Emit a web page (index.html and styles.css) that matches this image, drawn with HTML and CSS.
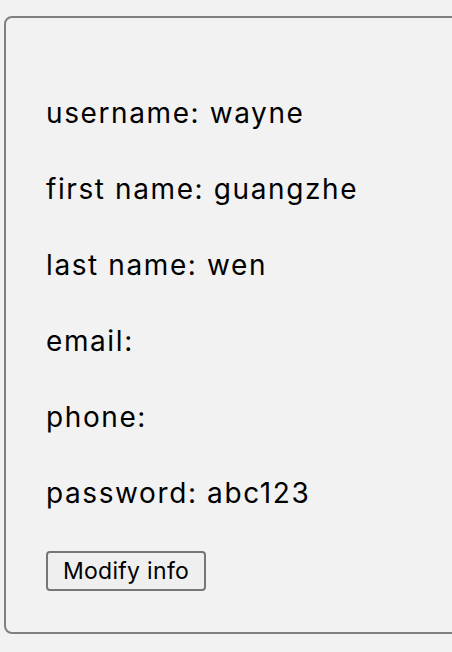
FILE: index.html
```html
<!DOCTYPE html>
<html>
<head>
<meta charset="utf-8">
<link rel="stylesheet" href="styles.css">
</head>
<body>
<div class="card">
  <div class="rows">
    <div class="row">username: wayne</div>
    <div class="row">first name: guangzhe</div>
    <div class="row">last name: wen</div>
    <div class="row">email:</div>
    <div class="row">phone:</div>
    <div class="row">password: abc123</div>
  </div>
  <button class="btn">Modify info</button>
</div>
</body>
</html>
```
FILE: styles.css
```css
html, body {
  margin: 0;
  background: #f2f2f2;
}
body {
  padding: 16px 0 0 4px;
  overflow: hidden;
  height: 652px;
  box-sizing: border-box;
}
.card {
  width: 500px;
  height: 618px;
  box-sizing: border-box;
  border: 2px solid #808080;
  border-radius: 8px;
  padding: 80px 0 0 40px;
  display: flex;
  flex-direction: column;
  align-items: flex-start;
  font-family: Inter, "Liberation Sans", Arial, sans-serif;
  color: #000;
}
.rows {
  display: flex;
  flex-direction: column;
  gap: 46px;
}
.row {
  font-size: 28px;
  line-height: 30px;
  letter-spacing: 1.6px;
  white-space: nowrap;
}
.btn {
  margin-top: 43px;
  width: 160px;
  height: 40px;
  box-sizing: border-box;
  border: 2px solid #767676;
  border-radius: 4px;
  background: #efefef;
  font-family: Inter, "Liberation Sans", Arial, sans-serif;
  font-size: 23px;
  letter-spacing: 0.3px;
  color: #000;
  padding: 0;
}
```
